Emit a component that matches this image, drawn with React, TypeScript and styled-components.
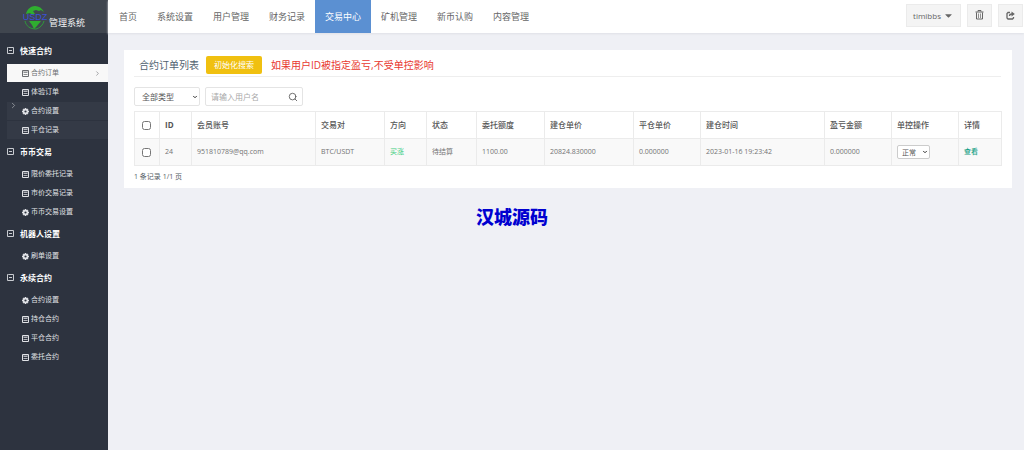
import React from 'react';
import styled, { createGlobalStyle } from 'styled-components';
import { FaCaretDown } from 'react-icons/fa';
import { ChevronDown, ChevronRight, Search } from 'lucide-react';

const GlobalStyle = createGlobalStyle`
  *, *::before, *::after { box-sizing: border-box; }
  body {
    margin: 0;
    background: #eff0f5;
    color: #6e7377;
    font-family: "Open Sans", "Noto Sans CJK SC", sans-serif;
    font-size: 8px;
    line-height: 12px;
  }
  button, input, select { font-family: inherit; }
  a { color: inherit; text-decoration: none; }
  ul { list-style: none; margin: 0; padding: 0; }
`;

const Page = styled.div`
  display: grid;
  grid-template-columns: 108px minmax(0, 1fr);
  min-height: 100vh;
`;

const Sidebar = styled.aside`
  background: #2d333f;
  color: #e4e6ea;
`;

const Brand = styled.a`
  display: flex;
  align-items: center;
  height: 33px;
  padding-left: 21px;
  background: #40464f;
  font-size: 9px;
`;

const BrandName = styled.span`
  padding-top: 12px;
  color: #f2f3f4;
`;

const Menu = styled.nav`
  position: relative;
  padding-top: 6px;
`;

const GroupTitle = styled.h2`
  display: flex;
  align-items: center;
  gap: 5px;
  height: 25px;
  margin: 0;
  padding: 0 0 2px 7px;
  color: #fff;
  font-size: 8px;
  line-height: 12px;
`;

const MenuLink = styled.a<{ $active?: boolean; $tinted?: boolean }>`
  display: flex;
  align-items: center;
  gap: 2px;
  height: 19px;
  margin-left: 7px;
  padding: 0 7px 0 15px;
  font-size: 7px;
  border-bottom: 1px solid #2d333f;
  color: ${p => (p.$active ? '#6a6d70' : '#e0e2e6')};
  background: ${p => (p.$active ? '#f8f8f8' : p.$tinted ? '#343a46' : 'transparent')};
`;

const LinkText = styled.span`
  flex: 1;
`;

const Collapse = styled.button`
  position: absolute;
  top: 66px;
  left: 7px;
  display: flex;
  align-items: center;
  justify-content: center;
  width: 12px;
  height: 12px;
  padding: 0;
  border: 0;
  background: none;
  color: #a4a8ae;
`;

const Content = styled.div`
  display: flex;
  flex-direction: column;
`;

const TopBar = styled.header`
  display: flex;
  justify-content: space-between;
  height: 33px;
  background: #fff;
  box-shadow: 0 1px 2px #dfe1e6;
`;

const TopNav = styled.nav`
  display: flex;
  padding-left: 1px;
`;

const TopLink = styled.a<{ $active?: boolean }>`
  display: flex;
  align-items: center;
  padding: 0 10px;
  font-size: 9px;
  color: ${p => (p.$active ? '#fff' : '#666')};
  background: ${p => (p.$active ? '#5b90d2' : 'transparent')};
`;

const Tools = styled.div`
  display: flex;
  align-items: center;
  gap: 6px;
  padding: 0 1px 3px 0;
`;

const ToolButton = styled.button<{ $wide?: boolean }>`
  display: flex;
  align-items: center;
  justify-content: center;
  gap: 2px;
  width: ${p => (p.$wide ? '55px' : '25px')};
  height: 23px;
  padding: 0;
  border: 1px solid #ebebeb;
  background: #f4f4f4;
  color: #666;
  font-size: 8px;
`;

const Card = styled.main`
  margin: 17px 12px 0 16px;
  padding: 4px 11px 5px 10px;
  background: #fff;
`;

const CardHead = styled.div`
  display: flex;
  align-items: center;
  gap: 7px;
  height: 23px;
  padding-left: 5px;
  border-bottom: 1px solid #eee;
`;

const CardTitle = styled.h1`
  margin: 0;
  color: #4f5f6f;
  font-size: 10px;
  font-weight: 400;
`;

const ResetButton = styled.button`
  height: 18px;
  padding: 0 8px;
  border: 0;
  border-radius: 2px;
  background: #f0c010;
  color: #fff;
  font-size: 8px;
  line-height: 12px;
`;

const Warning = styled.p`
  margin: 0 0 0 2px;
  color: #e8382f;
  font-size: 10px;
`;

const Filters = styled.form`
  display: flex;
  gap: 5px;
  padding: 10px 0 5px;
`;

const SelectBox = styled.span<{ $small?: boolean }>`
  position: relative;
  display: block;
  width: ${p => (p.$small ? '33px' : '66px')};
  height: ${p => (p.$small ? '14px' : '19px')};

  select {
    appearance: none;
    display: block;
    width: 100%;
    height: 100%;
    padding: 0 0 0 ${p => (p.$small ? '4px' : '7px')};
    border: 1px solid ${p => (p.$small ? '#ccc' : '#e4e4e4')};
    border-radius: 2px;
    background: #fff;
    color: #555;
    font-size: ${p => (p.$small ? '7px' : '8px')};
  }

  svg {
    position: absolute;
    top: 50%;
    right: 2px;
    margin-top: -3px;
    color: #333;
    pointer-events: none;
  }
`;

const SearchBox = styled.div`
  display: flex;
  align-items: center;
  width: 98px;
  height: 19px;
  padding: 0 4px 0 5px;
  border: 1px solid #e4e4e4;
  border-radius: 2px;

  input {
    flex: 1;
    min-width: 0;
    padding: 0;
    border: 0;
    outline: 0;
    color: #555;
    font-size: 8px;
  }

  input::placeholder { color: #a9a9a9; }

  button {
    display: flex;
    padding: 0;
    border: 0;
    background: none;
    color: #555;
  }
`;

const OrderTable = styled.table`
  width: 100%;
  table-layout: fixed;
  border-collapse: collapse;

  th, td {
    height: 27px;
    padding: 0 0 0 5px;
    border: 1px solid #ebebeb;
    text-align: left;
    white-space: nowrap;
  }

  th {
    color: #555;
    font-size: 8px;
    font-weight: 500;
  }

  th:nth-child(2) { font-weight: 700; }

  td {
    background: #f9f9f9;
    color: #737373;
    font-size: 7px;
  }
`;

const Check = styled.input`
  display: block;
  width: 9px;
  height: 9px;
  margin: 0 0 0 2px;
`;

const Long = styled.span`
  color: #3fce7f;
`;

const ViewLink = styled.a`
  && { color: #16a085; }
  font-weight: 500;
`;

const Summary = styled.p`
  margin: 5px 0 0;
  color: #555e66;
  font-size: 7px;
`;

const SourceLink = styled.a`
  align-self: center;
  margin: 17px 108px 0 0;
  && { color: #0000d0; }
  font-size: 18px;
  line-height: 24px;
  font-weight: 900;
`;

type Entry = { label: string; icon: 'list' | 'cog'; active?: boolean; tinted?: boolean };

const groups: { title: string; items: Entry[] }[] = [
  {
    title: '快速合约',
    items: [
      { label: '合约订单', icon: 'list', active: true },
      { label: '体验订单', icon: 'list' },
      { label: '合约设置', icon: 'cog', tinted: true },
      { label: '平仓记录', icon: 'list', tinted: true },
    ],
  },
  {
    title: '币币交易',
    items: [
      { label: '限价委托记录', icon: 'list' },
      { label: '市价交易记录', icon: 'list' },
      { label: '币币交易设置', icon: 'cog' },
    ],
  },
  { title: '机器人设置', items: [{ label: '刷单设置', icon: 'cog' }] },
  {
    title: '永续合约',
    items: [
      { label: '合约设置', icon: 'cog' },
      { label: '持仓合约', icon: 'list' },
      { label: '平仓合约', icon: 'list' },
      { label: '委托合约', icon: 'list' },
    ],
  },
];

const topLinks = ['首页', '系统设置', '用户管理', '财务记录', '交易中心', '矿机管理', '新币认购', '内容管理'];

const columns: [string, number][] = [
  ['ID', 32], ['会员账号', 124], ['交易对', 69], ['方向', 42], ['状态', 50], ['委托额度', 68],
  ['建仓单价', 89], ['平仓单价', 67], ['建仓时间', 124], ['盈亏金额', 67], ['单控操作', 67], ['详情', 43],
];

const Logo = () => (
  <svg width="28" height="28" viewBox="0 0 28 28" aria-hidden="true">
    <path d="M5 11C6 6 10 3 14 3c4 0 7 2 9 6l-3-2-2 1-3-1-3 1 2 3-3 1-2-2z" fill="#2fae2f" />
    <path d="M8 18h12c-1 2-3 3-4 5l-3 3-2-4z" fill="#2fae2f" />
    <path d="M4 18c1 5 5 8 11 8M23 18c-1 4-4 7-8 8" fill="none" stroke="#2f9a3a" strokeWidth="1" />
    <text x="14" y="17" textAnchor="middle" fontFamily="Liberation Sans, sans-serif" fontSize="9" fill="#3a50d8">USDZ</text>
  </svg>
);

const MinusIcon = () => (
  <svg width="8" height="8" viewBox="0 0 8 8" fill="none" stroke="#c9ccd1" aria-hidden="true">
    <path d="M1.5.5h5v6h-6v-6zM2 3.5h3" />
  </svg>
);

const ListIcon = () => (
  <svg width="7" height="7" viewBox="0 0 7 7" fill="none" stroke="currentColor" aria-hidden="true">
    <path d="M.5.5h6v6h-6z" strokeWidth="1" />
    <path d="M1 1h5" strokeWidth="1" strokeOpacity=".6" />
    <path d="M1.5 2.5h4M1.5 4.5h4" strokeWidth="1" strokeOpacity=".75" />
  </svg>
);

const CogIcon = () => (
  <svg width="7" height="7" viewBox="0 0 14 14" fill="none" stroke="currentColor" aria-hidden="true">
    <circle cx="7" cy="7" r="4" strokeWidth="3.6" />
    <path d="M7 0v2M7 12v2M0 7h2M12 7h2M2 2l1.5 1.5M10.500 10.500 12 12M12 2l-1.500 1.500M3.500 10.500 2 12" strokeWidth="2.600" />
  </svg>
);

const TrashIcon = () => (
  <svg width="9" height="10" viewBox="0 0 9 10" fill="none" stroke="currentColor" aria-hidden="true">
    <path d="M3 1.500V.5h3v1M.5 2h8M1.500 2.500v6.500h6V2.500" />
    <path d="M3.500 3.500v4.500M5.500 3.500v4.500" strokeOpacity=".7" />
  </svg>
);

const ExitIcon = () => (
  <svg width="9" height="9" viewBox="0 0 9 9" fill="none" stroke="currentColor" aria-hidden="true">
    <path d="M4 1.500H2L1 2.500v4.500l1 1h4.500l1-1V6" strokeWidth="1.300" />
    <path d="M3.500 5c0-1.500 1-2 2.500-2" strokeWidth="1.300" />
    <path d="M5.500.5 8.800 3 5.500 5.500z" fill="currentColor" stroke="none" />
  </svg>
);

export default function App() {
  return (
    <>
      <GlobalStyle />
      <Page>
        <Sidebar>
          <Brand href="#">
            <Logo />
            <BrandName>管理系统</BrandName>
          </Brand>
          <Menu>
            {groups.map(group => (
              <section key={group.title}>
                <GroupTitle><MinusIcon />{group.title}</GroupTitle>
                <ul>
                  {group.items.map(item => (
                    <li key={item.label}>
                      <MenuLink href="#" $active={item.active} $tinted={item.tinted}>
                        {item.icon === 'list' ? <ListIcon /> : <CogIcon />}
                        <LinkText>{item.label}</LinkText>
                        {item.active && <ChevronRight size={7} />}
                      </MenuLink>
                    </li>
                  ))}
                </ul>
              </section>
            ))}
            <Collapse type="button" aria-label="收起菜单"><ChevronRight size={9} /></Collapse>
          </Menu>
        </Sidebar>
        <Content>
          <TopBar>
            <TopNav>
              {topLinks.map(label => (
                <TopLink key={label} href="#" $active={label === '交易中心'}>{label}</TopLink>
              ))}
            </TopNav>
            <Tools>
              <ToolButton type="button" $wide>timibbs<FaCaretDown size={11} /></ToolButton>
              <ToolButton type="button" aria-label="清除缓存"><TrashIcon /></ToolButton>
              <ToolButton type="button" aria-label="退出"><ExitIcon /></ToolButton>
            </Tools>
          </TopBar>
          <Card>
            <CardHead>
              <CardTitle>合约订单列表</CardTitle>
              <ResetButton type="button">初始化搜索</ResetButton>
              <Warning>如果用户ID被指定盈亏,不受单控影响</Warning>
            </CardHead>
            <Filters>
              <SelectBox>
                <select aria-label="类型"><option>全部类型</option></select>
                <ChevronDown size={6} strokeWidth={4} />
              </SelectBox>
              <SearchBox>
                <input type="text" aria-label="用户名" placeholder="请输入用户名" />
                <button type="button" aria-label="搜索"><Search size={10} /></button>
              </SearchBox>
            </Filters>
            <OrderTable>
              <colgroup>
                <col style={{ width: 25 }} />
                {columns.map(([name, width]) => <col key={name} style={{ width }} />)}
              </colgroup>
              <thead>
                <tr>
                  <th><Check type="checkbox" aria-label="全选" /></th>
                  {columns.map(([name]) => <th key={name}>{name}</th>)}
                </tr>
              </thead>
              <tbody>
                <tr>
                  <td><Check type="checkbox" aria-label="选择订单 24" /></td>
                  <td>24</td>
                  <td>951810789@qq.com</td>
                  <td>BTC/USDT</td>
                  <td><Long>买涨</Long></td>
                  <td>待结算</td>
                  <td>1100.00</td>
                  <td>20824.830000</td>
                  <td>0.000000</td>
                  <td>2023-01-16 19:23:42</td>
                  <td>0.000000</td>
                  <td>
                    <SelectBox $small>
                      <select aria-label="单控操作"><option>正常</option></select>
                      <ChevronDown size={6} strokeWidth={4} />
                    </SelectBox>
                  </td>
                  <td><ViewLink href="#">查看</ViewLink></td>
                </tr>
              </tbody>
            </OrderTable>
            <Summary>1 条记录 1/1 页</Summary>
          </Card>
          <SourceLink href="#">汉城源码</SourceLink>
        </Content>
      </Page>
    </>
  );
}
